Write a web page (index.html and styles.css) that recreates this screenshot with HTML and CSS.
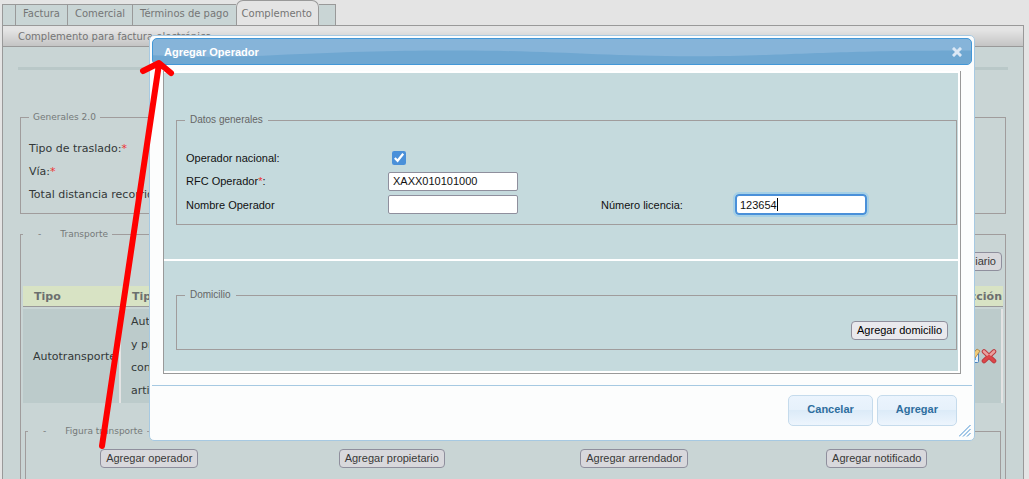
FILE: index.html
```html
<!DOCTYPE html>
<html lang="es">
<head>
<meta charset="utf-8">
<title>Complemento</title>
<link rel="stylesheet" href="styles.css">
</head>
<body>
<div class="page">
  <nav class="tabs">
    <span class="tab-end"></span>
    <a class="tab" href="#factura">Factura</a>
    <a class="tab" href="#comercial">Comercial</a>
    <a class="tab" href="#terminos">Términos de pago</a>
    <a class="tab active" href="#complemento">Complemento</a>
    <span class="tab-end tail"></span>
  </nav>
  <main class="panel">
    <h1 class="panel-title">Complemento para factura electrónica</h1>
    <hr class="rule">
    <fieldset class="group general">
      <legend>Generales 2.0</legend>
      <div class="line">Tipo de traslado:<span class="req">*</span></div>
      <div class="line">Vía:<span class="req">*</span></div>
      <div class="line">Total distancia recorrida:</div>
    </fieldset>
    <fieldset class="group transport">
      <legend class="fold"><span>-</span><span>Transporte</span></legend>
      <div class="toolbar"><button type="button" class="btn muted">Agregar intermediario</button></div>
      <table class="grid">
        <thead>
          <tr><th class="c-type">Tipo</th><th>Tipo de transporte</th><th class="c-act">Acción</th></tr>
        </thead>
        <tbody>
          <tr>
            <td>Autotransporte</td>
            <td>Autotransporte<br>y propio<br>con carga<br>articulado</td>
            <td class="c-act">
              <button type="button" class="icon" aria-label="Editar">
                <svg width="16" height="16" viewBox="0 0 16 16"><rect x="0.500" y="2.500" width="13" height="12" rx="1" fill="#e9f4fc" stroke="#4c82bd"/><path d="M3 9h8v3H3z" fill="#6aa8dc"/><path d="M6 8l6-7 3 2-5 7-3 1z" fill="#f0cb78" stroke="#b58d52"/></svg>
              </button>
              <button type="button" class="icon" aria-label="Eliminar">
                <svg width="16" height="16" viewBox="0 0 16 16"><path d="M3 3.500l10 9.500M13 3.500L3 13" stroke="#bc3c40" stroke-width="4.600" stroke-linecap="round"/><path d="M3 3.500l5 4.700L13 3.500" fill="none" stroke="#eaa09e" stroke-width="2.600" stroke-linecap="round"/><path d="M3 13l5-4.800 5 4.800" fill="none" stroke="#dc4548" stroke-width="2.800" stroke-linecap="round"/></svg>
              </button>
            </td>
          </tr>
        </tbody>
      </table>
      <fieldset class="group figure">
        <legend class="fold"><span>-</span><span>Figura transporte</span></legend>
        <div class="actions">
          <button type="button" class="btn muted">Agregar operador</button>
          <button type="button" class="btn muted">Agregar propietario</button>
          <button type="button" class="btn muted">Agregar arrendador</button>
          <button type="button" class="btn muted">Agregar notificado</button>
        </div>
      </fieldset>
    </fieldset>
  </main>
</div>

<section class="dialog" role="dialog" aria-labelledby="dlg-title">
  <header class="dialog-head">
    <svg class="wave" viewBox="0 0 820 26" preserveAspectRatio="none" aria-hidden="true"><path d="M0 17C40 19 80 19 120 17C200 13 250 12 305 12C400 12 450 18 540 18C630 18 670 12 820 12V26H0z" fill="#6fa7d1"/></svg>
    <h2 id="dlg-title">Agregar Operador</h2>
    <button type="button" class="close" aria-label="Cerrar">
      <svg width="10" height="10" viewBox="0 0 10 10"><path d="M2 2l6 6M8 2L2 8" stroke="#dbe8f5" stroke-width="3" stroke-linecap="square"/></svg>
    </button>
  </header>
  <div class="dialog-body">
    <div class="block">
      <fieldset class="group">
        <legend>Datos generales</legend>
        <div class="form">
          <label for="nac">Operador nacional:</label>
          <input type="checkbox" id="nac" checked>
          <label class="start" for="rfc">RFC Operador<span class="req">*</span>:</label>
          <input type="text" id="rfc" value="XAXX010101000">
          <label class="start" for="nom">Nombre Operador</label>
          <input type="text" id="nom">
          <label for="lic">Número licencia:</label>
          <span class="focused"><input type="text" id="lic" value="123654"><i class="caret"></i></span>
        </div>
      </fieldset>
    </div>
    <div class="block address">
      <fieldset class="group">
        <legend>Domicilio</legend>
        <div class="right"><button type="button" class="btn">Agregar domicilio</button></div>
      </fieldset>
    </div>
  </div>
  <footer class="dialog-foot">
    <button type="button" class="ui-btn">Cancelar</button>
    <button type="button" class="ui-btn">Agregar</button>
  </footer>
  <svg class="grip" width="12" height="12" viewBox="0 0 12 12" aria-hidden="true"><path d="M0 11.500L11.500 0M4 11.500L11.500 4M8 11.500L11.500 8" stroke="#4a93d2" fill="none"/></svg>
</section>

<svg class="arrow" width="80" height="400" viewBox="0 0 80 400" aria-hidden="true"><path d="M7 390L64 8M48 15L64 7L76 17" transform="translate(0 2)" fill="none" stroke="#f00" stroke-width="6" stroke-linecap="round" stroke-linejoin="round"/></svg>
</body>
</html>
```
FILE: styles.css
```css
* { box-sizing: border-box; }
html, body { height: 100%; }
body {
  margin: 0;
  overflow: hidden;
  position: relative;
  background: #e4e4e4;
  color: #333838;
  font: 11px/23px "DejaVu Sans", sans-serif;
}
.page { height: 100%; display: flex; flex-direction: column; padding: 0 5px 0 2px; }

.tabs { display: flex; align-items: flex-end; height: 25px; }
.tab, .tab-end {
  height: 21px;
  background: #c9d5d5;
  border: solid #999;
  border-width: 1px 0 0 1px;
}
.tab { padding: 0 7px; color: #757575; font-size: 10px; line-height: 18px; text-decoration: none; white-space: nowrap; }
.tab-end { width: 13px; }
.tab.active {
  height: 26px;
  margin-bottom: -1px;
  padding: 0 6px 0 5px;
  line-height: 26px;
  background: #e4e4e4;
  border-width: 1px 1px 0;
  border-radius: 7px 7px 0 0;
}
.tail { width: 17px; border-width: 1px 1px 0 0; }

.panel { flex: 1; min-height: 0; display: flex; flex-direction: column; background: #c9d5d5; border: 1px solid #999; border-bottom: 0; }
.panel-title {
  flex: none;
  margin: 0;
  padding: 0 15px;
  height: 21px;
  border-bottom: 1px solid #999;
  background: linear-gradient(#e4e4e4 20%, #c4c4c4);
  color: #757575;
  font-size: 10px;
  font-weight: normal;
  line-height: 21px;
}
.rule { flex: none; width: auto; height: 3px; margin: 20px 15px 41px; border: 0; background: #b9c8c8; }

.group { min-width: 0; margin: 0; padding: 0; border: 1px solid #a09c9c; }
legend { margin-left: 8px; padding: 0 4px; color: #757979; font-size: 9px; line-height: 12px; }
.fold { display: flex; gap: 19px; margin-left: 0; padding-left: 15px; }
.req { color: #e33; }
.general { flex: none; margin: 0 17px 14px; padding: 14px 8px 7px; }
.general legend { margin-left: 0; }
.transport { flex: 1; min-height: 0; margin: 0 17px; padding: 12px 2px 0; border-bottom: 0; }
.toolbar { display: flex; justify-content: flex-end; padding-right: 1px; margin-bottom: 15px; }

.btn {
  height: 19px;
  padding: 0 5px;
  border: 1px solid #8f8f9d;
  border-radius: 4px;
  background: #e9e9ed;
  color: #000;
  font: 11px/17px "Liberation Sans", sans-serif;
}
.btn.muted { background: #d8d8dc; color: #383838; }

.grid { width: 100%; border-collapse: separate; border-spacing: 0; table-layout: fixed; margin-bottom: 22px; }
.grid th { height: 21px; padding: 2px 11px 0; background: #d8e3c4; border-bottom: 1px solid #999; color: #6c6f6f; line-height: 18px; text-align: left; }
.grid tbody::before { content: ""; display: block; height: 2px; }
.grid td { padding: 1px 10px; background: #bccbcb; border-right: 2px solid #e4e4e4; vertical-align: middle; }
.grid .c-type { width: 98px; }
.grid .c-act { width: 90px; padding-right: 1px; text-align: right; }
.grid td.c-act { padding-right: 4px; font-size: 0; }
.icon { width: 16px; height: 16px; padding: 0; border: 0; background: none; vertical-align: middle; }
.icon svg { display: block; }

.figure { height: 54px; margin: 0 2px; padding: 12px 2px 0; border-bottom: 0; }
.actions { display: grid; grid-template-columns: repeat(4, 1fr); justify-items: center; }

.dialog {
  position: absolute;
  top: 35px;
  left: 149px;
  right: 54px;
  padding: 2px;
  border: 1px solid #a6c9e2;
  border-radius: 5px;
  background: #fcfdfd;
  color: #111;
  font: 11px/14px "Liberation Sans", sans-serif;
}
.dialog-head {
  position: relative;
  display: flex;
  align-items: center;
  justify-content: space-between;
  height: 27px;
  padding: 0 9px 0 11px;
  border: 1px solid #4297d7;
  border-radius: 5px;
  background: #86b4d9;
  overflow: hidden;
}
.wave { position: absolute; inset: 0; width: 100%; height: 100%; }
.dialog-head h2 { position: relative; margin: 0; color: #fff; font-size: 11px; line-height: 14px; }
.close { position: relative; width: 10px; height: 10px; padding: 0; border: 0; background: none; }
.close svg { display: block; }
.dialog-body { margin: 6px 11px 11px; padding: 2px 2px 2px 0; border: 1px solid #999; border-top: 0; background: #fff; }
.block { padding: 41px 1px 34px 12px; background: #c5dadd; }
.block legend { font-family: "Liberation Sans", sans-serif; font-size: 10px; padding: 0 5px; color: #666; }
.form {
  display: grid;
  grid-template-columns: 202px 213px 134px 1fr;
  grid-template-rows: 23px 24px 23px;
  align-items: center;
  padding: 20px 9px 8px;
}
.form .start { grid-column: 1; }
.form input[type="text"] {
  width: 130px;
  height: 19px;
  margin: 0;
  padding: 0 4px;
  border: 1px solid #8f8f9d;
  border-radius: 2px;
  background: #fff;
  color: #111;
  font: 11px/15px "Liberation Sans", sans-serif;
}
.form input[type="checkbox"] { width: 14px; height: 14px; margin: 0 4px; accent-color: #4a90d9; }
.focused { position: relative; display: block; }
.form .focused input {
  display: block;
  width: 132px;
  height: 21px;
  padding: 0 3px;
  border: 2px solid #4a90d9;
  border-radius: 4px;
  outline: 2px solid #a5d0e6;
  outline-offset: 0;
}
.caret { position: absolute; left: 42px; top: 4px; width: 1px; height: 13px; background: #000; }
.address { margin-top: 2px; padding: 28px 1px 21px 12px; }
.right { display: flex; justify-content: flex-end; padding: 20px 8px 9px; }
.dialog-foot { display: flex; justify-content: flex-end; gap: 4px; padding: 9px 15px 12px; border-top: 1px solid #a6c9e2; }
.ui-btn {
  height: 31px;
  padding: 0 18px 3px;
  border: 1px solid #c5dbec;
  border-radius: 5px;
  background: linear-gradient(#ebf4fd, #e6f1fb 48%, #dcebf8 50%, #edf5fd);
  color: #2e6e9e;
  font: bold 11px/14px "Liberation Sans", sans-serif;
}
.grip { position: absolute; right: 3px; bottom: 3px; }
.arrow { position: absolute; left: 95px; top: 54px; }
```
